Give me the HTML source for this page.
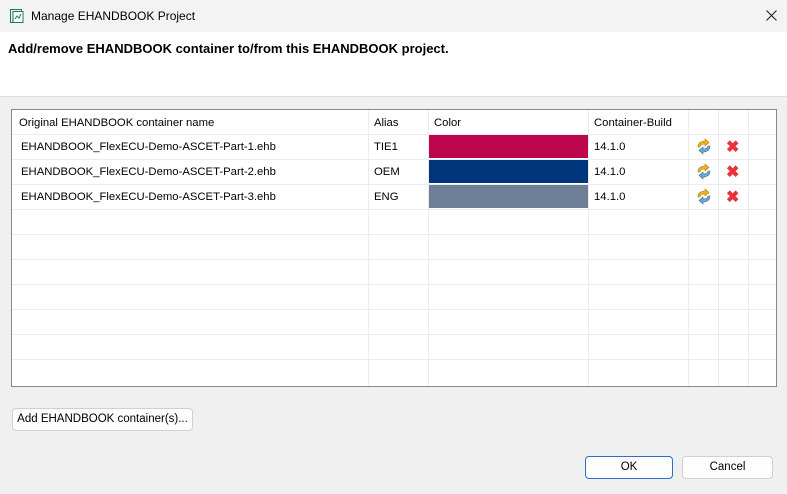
<!DOCTYPE html>
<html><head><style>
*{margin:0;padding:0;box-sizing:border-box}
body{width:787px;height:494px;background:#f0f0f0;font-family:"Liberation Sans",sans-serif;font-size:11.3px;color:#000;position:relative;overflow:hidden}
.abs{position:absolute}
#title{left:0;top:0;width:787px;height:32px;background:#f3f3f3}
#hdr{left:0;top:32px;width:787px;height:65px;background:#fff;border-bottom:1px solid #dcdcdc}
#tbl{left:11px;top:109px;width:766px;height:278px;background:#fff;border:1px solid #8a8a8a}
.vl{position:absolute;top:0;width:1px;height:276px;background:#ececec}
.hl{position:absolute;left:0;width:764px;height:1px;background:#ececec}
.t{position:absolute;white-space:nowrap;line-height:14px}
.btn{position:absolute;background:#fdfdfd;border:1px solid #d0d0d0;border-radius:4px;text-align:center;line-height:21px;font-size:11.5px}
.x{position:absolute;color:#e8323c;font-weight:bold;font-size:16px}
</style></head><body>
<div id="title" class="abs"></div>
<svg class="abs" style="left:9px;top:8px" width="16" height="16" viewBox="0 0 16 16"><rect x="1.5" y="1.5" width="11" height="13" fill="#dff2ea" stroke="#1f7a5a"/><rect x="4" y="3.5" width="10" height="11" fill="#fff" stroke="#1f7a5a"/><path d="M6 11l2-3 2 2 2-4" stroke="#1f7a5a" fill="none"/></svg>
<div class="t" style="left:31px;top:9px;font-size:12px">Manage EHANDBOOK Project</div>
<svg class="abs" style="left:766px;top:10px" width="11" height="11" viewBox="0 0 11 11"><path d="M.5.5l10 10M10.5.5l-10 10" stroke="#222" stroke-width="1.1"/></svg>
<div id="hdr" class="abs"></div>
<div class="t" style="left:8px;top:42px;font-weight:bold;font-size:13px">Add/remove EHANDBOOK container to/from this EHANDBOOK project.</div>
<div id="tbl" class="abs">
<div class="vl" style="left:356px"></div><div class="vl" style="left:416px"></div><div class="vl" style="left:576px"></div><div class="vl" style="left:676px"></div><div class="vl" style="left:706px"></div><div class="vl" style="left:736px"></div>
<div class="hl" style="top:24px"></div><div class="hl" style="top:49px"></div><div class="hl" style="top:74px"></div><div class="hl" style="top:99px"></div><div class="hl" style="top:124px"></div><div class="hl" style="top:149px"></div><div class="hl" style="top:174px"></div><div class="hl" style="top:199px"></div><div class="hl" style="top:224px"></div><div class="hl" style="top:249px"></div>
<div class="t" style="left:7px;top:6px">Original EHANDBOOK container name</div>
<div class="t" style="left:362px;top:6px">Alias</div>
<div class="t" style="left:422px;top:6px">Color</div>
<div class="t" style="left:582px;top:6px">Container-Build</div>
<div class="abs" style="left:417px;top:25px;width:159px;height:23px;background:#be064e"></div>
<div class="abs" style="left:417px;top:50px;width:159px;height:23px;background:#00357b"></div>
<div class="abs" style="left:417px;top:75px;width:159px;height:23px;background:#6e8097"></div>
<div class="t" style="left:9px;top:30px">EHANDBOOK_FlexECU-Demo-ASCET-Part-1.ehb</div>
<div class="t" style="left:9px;top:55px">EHANDBOOK_FlexECU-Demo-ASCET-Part-2.ehb</div>
<div class="t" style="left:9px;top:80px">EHANDBOOK_FlexECU-Demo-ASCET-Part-3.ehb</div>
<div class="t" style="left:362px;top:30px">TIE1</div><div class="t" style="left:362px;top:55px">OEM</div><div class="t" style="left:362px;top:80px">ENG</div>
<div class="t" style="left:582px;top:30px">14.1.0</div><div class="t" style="left:582px;top:55px">14.1.0</div><div class="t" style="left:582px;top:80px">14.1.0</div>
<svg class="abs" style="left:684px;top:28px" width="16" height="70" viewBox="0 0 16 70">
<g id="i"><path d="M2 9c0-4 3-6 7-6V1l4 3.5-4 3.5V6c-3 0-5 1-5 3z" fill="#f0b01e" stroke="#b07a10" stroke-width=".6"/><path d="M14 8c0 4-3 6-7 6v2l-4-3.5 4-3.5v2c3 0 5-1 5-3z" fill="#6fa9c9" stroke="#3a7090" stroke-width=".6"/></g>
<use href="#i" y="25"/><use href="#i" y="50"/></svg>
<div class="x" style="left:714px;top:27px">✖</div><div class="x" style="left:714px;top:52px">✖</div><div class="x" style="left:714px;top:77px">✖</div>
</div>
<div class="btn" style="left:12px;top:408px;width:181px;height:23px">Add EHANDBOOK container(s)...</div>
<div class="btn" style="left:585px;top:456px;width:88px;height:23px;border:1px solid #2a6fc9">OK</div>
<div class="btn" style="left:682px;top:456px;width:91px;height:23px">Cancel</div>
</body></html>
